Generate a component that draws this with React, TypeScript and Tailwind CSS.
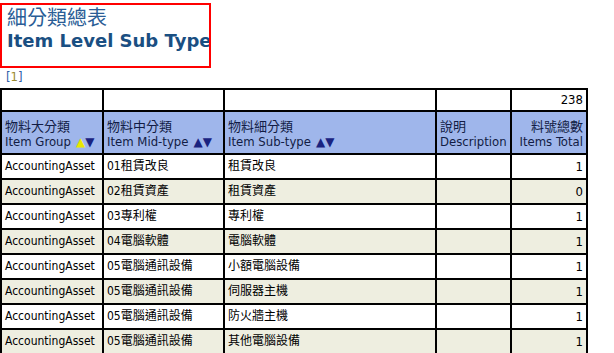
const font = "font-['DejaVu_Sans_Condensed','DejaVu_Sans','Noto_Sans_CJK_TC',sans-serif]";

const rows = [
  { group: "AccountingAsset", mid: "01租賃改良", sub: "租賃改良", total: 1 },
  { group: "AccountingAsset", mid: "02租賃資產", sub: "租賃資產", total: 0 },
  { group: "AccountingAsset", mid: "03專利權", sub: "專利權", total: 1 },
  { group: "AccountingAsset", mid: "04電腦軟體", sub: "電腦軟體", total: 1 },
  { group: "AccountingAsset", mid: "05電腦通訊設備", sub: "小額電腦設備", total: 1 },
  { group: "AccountingAsset", mid: "05電腦通訊設備", sub: "伺服器主機", total: 1 },
  { group: "AccountingAsset", mid: "05電腦通訊設備", sub: "防火牆主機", total: 1 },
  { group: "AccountingAsset", mid: "05電腦通訊設備", sub: "其他電腦設備", total: 1 },
];

function Arrows({ upActive }: { upActive?: boolean }) {
  return (
    <span className="ml-[5px] text-[12px] font-['DejaVu_Sans',sans-serif]">
      <span className={upActive ? "text-[#e8e800]" : "text-[#1a2380]"}>▲</span>
      <span className="text-[#1a2380]">▼</span>
    </span>
  );
}

function Head({ zh, en, right, arrows, upActive }: { zh: string; en: string; right?: boolean; arrows?: boolean; upActive?: boolean }) {
  return (
    <div className={`h-[41px] bg-[#9fb6eb] px-[3px] pt-[7px] leading-[15px] text-[13px] text-[#121c44] whitespace-nowrap ${right ? "text-right" : ""}`}>
      <div>{zh}</div>
      <div>
        {en}
        {arrows && <Arrows upActive={upActive} />}
      </div>
    </div>
  );
}

export default function App() {
  return (
    <div className={`${font} bg-white w-[614px] h-[353px] overflow-hidden text-[12px] text-black`}>
      <div className="mt-[3px] w-[211px] h-[65px] border-2 border-[#f00] overflow-hidden pl-[5px] whitespace-nowrap">
        <div className="text-[20px] leading-[24px] text-[#2a5d96] font-['Noto_Sans_CJK_TC',sans-serif]">細分類總表</div>
        <div className="text-[18px] leading-[24px] font-bold text-[#1a4f82] font-['DejaVu_Sans',sans-serif]">Item Level Sub Type</div>
      </div>
      <div className="pl-[6px] h-[20px] leading-[16px] pt-[1px] text-[13px] text-[#3060a8]">
        [<span className="text-[#9a8a30]">1</span>]
      </div>
      <div className="grid grid-cols-[100px_119px_210px_73px_74px] gap-[2px] p-[2px] bg-black w-[588px]">
        <div className="h-[20px] bg-white" />
        <div className="h-[20px] bg-white" />
        <div className="h-[20px] bg-white" />
        <div className="h-[20px] bg-white" />
        <div className="h-[20px] bg-white text-right pr-[3px] leading-[20px] text-[13px]">238</div>

        <Head zh="物料大分類" en="Item Group" arrows upActive />
        <Head zh="物料中分類" en="Item Mid-type" arrows />
        <Head zh="物料細分類" en="Item Sub-type" arrows />
        <Head zh="說明" en="Description" />
        <Head zh="料號總數" en="Items Total" right />

        {rows.map((r, i) => {
          const bg = i % 2 === 1 ? "bg-[#eeeee0]" : "bg-white";
          return [
            <div key={`a${i}`} className={`h-[23px] ${bg} px-[3px] leading-[23px] whitespace-nowrap`}>{r.group}</div>,
            <div key={`b${i}`} className={`h-[23px] ${bg} px-[3px] leading-[23px] whitespace-nowrap`}>{r.mid}</div>,
            <div key={`c${i}`} className={`h-[23px] ${bg} px-[3px] leading-[23px] whitespace-nowrap`}>{r.sub}</div>,
            <div key={`d${i}`} className={`h-[23px] ${bg}`} />,
            <div key={`e${i}`} className={`h-[23px] ${bg} px-[3px] leading-[23px] text-right text-[13px]`}>{r.total}</div>,
          ];
        })}
      </div>
    </div>
  );
}
